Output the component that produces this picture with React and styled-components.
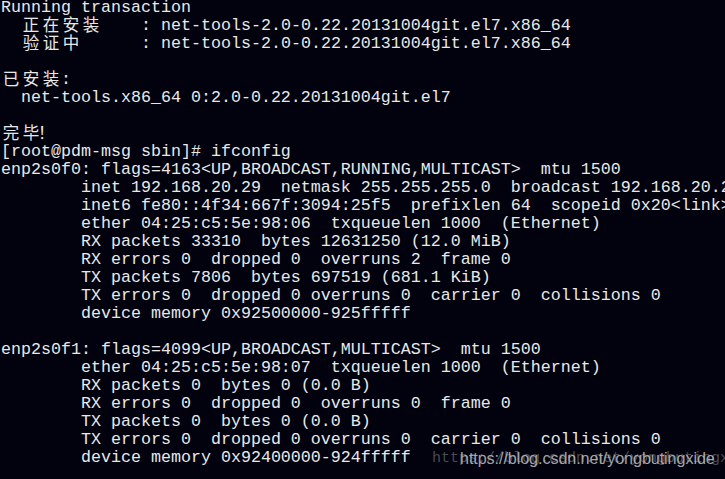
import styled, {createGlobalStyle} from 'styled-components';

const GlobalStyle = createGlobalStyle`
  html, body {
    margin: 0;
    padding: 0;
    background: #01020e;
  }
`;

const Screen = styled.div`
  position: relative;
  height: 479px;
  overflow: hidden;
  background: #01020e;
  color: #e8e8e8;
  padding-left: 1px;
`;

const Output = styled.div`
  margin-top: -1px;
  font-family: 'Courier New', 'Liberation Mono', monospace;
  font-size: 16.67px;
  line-height: 18px;
  white-space: pre;
`;

const Line = styled.div`
  height: 18px;
`;

const Wide = styled.span`
  display: inline-block;
  width: 20px;
  text-align: ${({$punct}) => ($punct ? 'left' : 'center')};
  text-indent: ${({$punct}) => ($punct ? '-3px' : '0')};
  font-family: 'Noto Sans CJK SC', sans-serif;
  font-size: 16.5px;
  line-height: 14px;
  vertical-align: top;
`;

const Ghost = styled.div`
  position: absolute;
  left: 432px;
  top: 450px;
  font-family: 'Liberation Mono', monospace;
  font-size: 15px;
  line-height: 18px;
  color: rgba(150, 150, 150, 0.5);
  white-space: pre;
`;

const Mark = styled.div`
  position: absolute;
  left: 460px;
  top: 449px;
  font-family: 'Liberation Sans', Arial, sans-serif;
  font-size: 16.2px;
  line-height: 18px;
  letter-spacing: -0.1px;
  color: rgba(195, 195, 195, 0.85);
  white-space: pre;
`;

const lines = [
  'Running transaction',
  '  正在安装    : net-tools-2.0-0.22.20131004git.el7.x86_64',
  '  验证中      : net-tools-2.0-0.22.20131004git.el7.x86_64',
  '',
  '已安装:',
  '  net-tools.x86_64 0:2.0-0.22.20131004git.el7',
  '',
  '完毕！',
  '[root@pdm-msg sbin]# ifconfig',
  'enp2s0f0: flags=4163<UP,BROADCAST,RUNNING,MULTICAST>  mtu 1500',
  '        inet 192.168.20.29  netmask 255.255.255.0  broadcast 192.168.20.255',
  '        inet6 fe80::4f34:667f:3094:25f5  prefixlen 64  scopeid 0x20<link>',
  '        ether 04:25:c5:5e:98:06  txqueuelen 1000  (Ethernet)',
  '        RX packets 33310  bytes 12631250 (12.0 MiB)',
  '        RX errors 0  dropped 0  overruns 2  frame 0',
  '        TX packets 7806  bytes 697519 (681.1 KiB)',
  '        TX errors 0  dropped 0 overruns 0  carrier 0  collisions 0',
  '        device memory 0x92500000-925fffff',
  '',
  'enp2s0f1: flags=4099<UP,BROADCAST,MULTICAST>  mtu 1500',
  '        ether 04:25:c5:5e:98:07  txqueuelen 1000  (Ethernet)',
  '        RX packets 0  bytes 0 (0.0 B)',
  '        RX errors 0  dropped 0  overruns 0  frame 0',
  '        TX packets 0  bytes 0 (0.0 B)',
  '        TX errors 0  dropped 0 overruns 0  carrier 0  collisions 0',
  '        device memory 0x92400000-924fffff',
];

// split a line into narrow runs and double-width CJK cells
const renderLine = (text) => {
  const parts = [];
  let run = '';
  [...text].forEach((ch, i) => {
    if (ch.charCodeAt(0) > 0x2e80) {
      if (run) parts.push(run);
      run = '';
      parts.push(
        <Wide key={i} $punct={ch === '！'}>
          {ch}
        </Wide>
      );
    } else {
      run += ch;
    }
  });
  if (run) parts.push(run);
  return parts;
};

const App = () => {
  return (
    <>
      <GlobalStyle />
      <Screen>
        <Output>
          {lines.map((line, i) => (
            <Line key={i}>{renderLine(line)}</Line>
          ))}
        </Output>
        <Ghost>https://blog.csdn.net/yongbutingxide</Ghost>
        <Mark>https://blog.csdn.net/yongbutingxide</Mark>
      </Screen>
    </>
  );
};

export default App;
